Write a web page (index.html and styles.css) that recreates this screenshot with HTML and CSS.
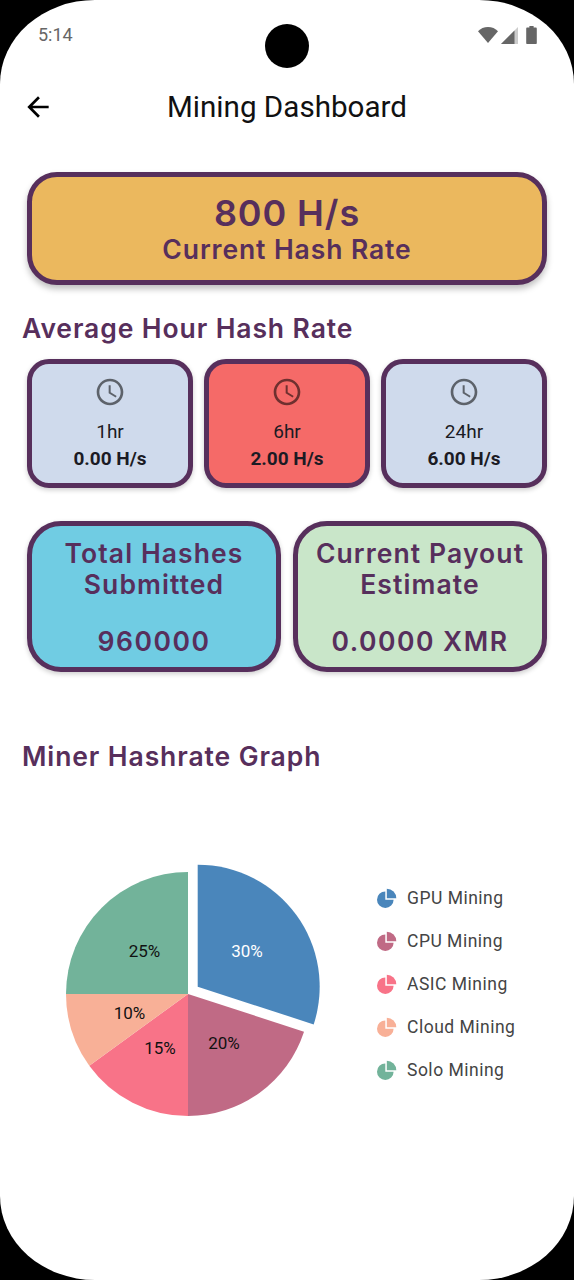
FILE: index.html
```html
<!DOCTYPE html>
<html lang="en">
<head>
    <meta charset="UTF-8">
    <meta name="viewport" content="width=device-width, initial-scale=1.0">
    <title>Mining Dashboard</title>
    <link rel="stylesheet" href="styles.css">
</head>
<body>
    <div class="screen">
        <div class="camera"></div>

        <div class="status-bar">
            <span class="status-time">5:14</span>
            <div class="status-icons">
                <svg class="status-wifi" viewBox="0 0 20 16"><path d="M10 16 0 4.200C2.600 1.600 6.100 0 10 0s7.400 1.600 10 4.200z"/></svg>
                <svg class="status-signal" viewBox="0 0 17 17"><path class="signal-dim" d="M17 0v17H0z"/><path d="M13.500 3.500V17H0z"/></svg>
                <svg class="status-battery" viewBox="0 0 10 17"><path d="M3 0h4v1.500h2c.6 0 1 .4 1 1V16c0 .6-.4 1-1 1H1c-.6 0-1-.4-1-1V2.500c0-.6.4-1 1-1h2z"/></svg>
            </div>
        </div>

        <header class="app-bar">
            <svg class="back-icon" viewBox="0 0 24 24"><path d="M20 11H7.830l5.590-5.590L12 4l-8 8 8 8 1.410-1.410L7.830 13H20z"/></svg>
            <h1 class="app-title">Mining Dashboard</h1>
        </header>

        <main class="content">
            <section class="hero-card">
                <div class="hero-value">800 H/s</div>
                <div class="hero-label">Current Hash Rate</div>
            </section>

            <h2 class="section-title avg-title">Average Hour Hash Rate</h2>

            <section class="avg-row">
                <div class="avg-card">
                    <svg class="clock-icon" viewBox="0 0 24 24"><path d="M11.990 2C6.470 2 2 6.480 2 12s4.470 10 9.990 10C17.520 22 22 17.520 22 12S17.520 2 11.990 2zM12 20c-4.420 0-8-3.580-8-8s3.580-8 8-8 8 3.580 8 8-3.580 8-8 8zm.5-13H11v6l5.250 3.150.75-1.230-4.500-2.670z"/></svg>
                    <div class="avg-period">1hr</div>
                    <div class="avg-value">0.00 H/s</div>
                </div>
                <div class="avg-card avg-card-active">
                    <svg class="clock-icon" viewBox="0 0 24 24"><path d="M11.990 2C6.470 2 2 6.480 2 12s4.470 10 9.990 10C17.520 22 22 17.520 22 12S17.520 2 11.990 2zM12 20c-4.420 0-8-3.580-8-8s3.580-8 8-8 8 3.580 8 8-3.580 8-8 8zm.5-13H11v6l5.250 3.150.75-1.230-4.500-2.670z"/></svg>
                    <div class="avg-period">6hr</div>
                    <div class="avg-value">2.00 H/s</div>
                </div>
                <div class="avg-card">
                    <svg class="clock-icon" viewBox="0 0 24 24"><path d="M11.990 2C6.470 2 2 6.480 2 12s4.470 10 9.990 10C17.520 22 22 17.520 22 12S17.520 2 11.990 2zM12 20c-4.420 0-8-3.580-8-8s3.580-8 8-8 8 3.580 8 8-3.580 8-8 8zm.5-13H11v6l5.250 3.150.75-1.230-4.500-2.670z"/></svg>
                    <div class="avg-period">24hr</div>
                    <div class="avg-value">6.00 H/s</div>
                </div>
            </section>

            <section class="total-row">
                <div class="total-card total-blue">
                    <div class="total-label">Total Hashes<br>Submitted</div>
                    <div class="total-value">960000</div>
                </div>
                <div class="total-card total-green">
                    <div class="total-label">Current Payout<br>Estimate</div>
                    <div class="total-value">0.0000 XMR</div>
                </div>
            </section>

            <h2 class="section-title graph-title">Miner Hashrate Graph</h2>

            <section class="chart-row">
                <svg class="pie" viewBox="0 0 270 264">
                    <path class="slice-gpu" transform="translate(9.7 -7.3)" d="M128 134V12A122 122 0 0 1 244 171.700Z"/>
                    <path class="slice-cpu" d="M128 134 244 171.700A122 122 0 0 1 128 256Z"/>
                    <path class="slice-asic" d="M128 134V256A122 122 0 0 1 29.300 205.700Z"/>
                    <path class="slice-cloud" d="M128 134 29.300 205.700A122 122 0 0 1 6 134Z"/>
                    <path class="slice-solo" d="M128 134H6A122 122 0 0 1 128 12Z"/>
                    <text class="pie-label pie-label-light" x="187" y="97">30%</text>
                    <text class="pie-label" x="84.500" y="97">25%</text>
                    <text class="pie-label" x="69.500" y="159">10%</text>
                    <text class="pie-label" x="100" y="194">15%</text>
                    <text class="pie-label" x="164" y="189">20%</text>
                </svg>

                <ul class="legend">
                    <li class="legend-item">
                        <svg class="legend-icon icon-gpu" viewBox="0 0 20 20"><path d="M8.300 3.400V11.700H16.600A8.300 8.300 0 1 1 8.300 3.400Z"/><path d="M9.800 .7A9.500 9.500 0 0 1 19.300 10.200H9.800Z"/></svg>
                        GPU Mining
                    </li>
                    <li class="legend-item">
                        <svg class="legend-icon icon-cpu" viewBox="0 0 20 20"><path d="M8.300 3.400V11.700H16.600A8.300 8.300 0 1 1 8.300 3.400Z"/><path d="M9.800 .7A9.500 9.500 0 0 1 19.300 10.200H9.800Z"/></svg>
                        CPU Mining
                    </li>
                    <li class="legend-item">
                        <svg class="legend-icon icon-asic" viewBox="0 0 20 20"><path d="M8.300 3.400V11.700H16.600A8.300 8.300 0 1 1 8.300 3.400Z"/><path d="M9.800 .7A9.500 9.500 0 0 1 19.300 10.200H9.800Z"/></svg>
                        ASIC Mining
                    </li>
                    <li class="legend-item">
                        <svg class="legend-icon icon-cloud" viewBox="0 0 20 20"><path d="M8.300 3.400V11.700H16.600A8.300 8.300 0 1 1 8.300 3.400Z"/><path d="M9.800 .7A9.500 9.500 0 0 1 19.300 10.200H9.800Z"/></svg>
                        Cloud Mining
                    </li>
                    <li class="legend-item">
                        <svg class="legend-icon icon-solo" viewBox="0 0 20 20"><path d="M8.300 3.400V11.700H16.600A8.300 8.300 0 1 1 8.300 3.400Z"/><path d="M9.800 .7A9.500 9.500 0 0 1 19.300 10.200H9.800Z"/></svg>
                        Solo Mining
                    </li>
                </ul>
            </section>
        </main>
    </div>
</body>
</html>
```

FILE: styles.css
```css
* {
    box-sizing: border-box;
}
html, body {
    margin: 0;
    background: #000;
}
body {
    width: 574px;
    height: 1280px;
    overflow: hidden;
    font-family: Roboto, sans-serif;
}
.screen {
    position: relative;
    height: 1280px;
    background: #fff;
    border-radius: 95px / 84px;
    overflow: hidden;
}
.camera {
    position: absolute;
    top: 24px;
    left: 265px;
    width: 44px;
    height: 44px;
    border-radius: 50%;
    background: #000;
}

/* status bar */
.status-bar {
    height: 68px;
    padding: 24px 37px 0 38px;
    display: flex;
    justify-content: space-between;
    align-items: flex-start;
}
.status-time {
    font-size: 18px;
    line-height: 21px;
    color: #666;
}
.status-icons {
    display: flex;
    align-items: center;
    gap: 3px;
    margin-top: 2px;
    fill: #666;
}
.status-wifi {
    width: 20px;
    height: 16px;
}
.status-signal {
    width: 17px;
    height: 17px;
}
.signal-dim {
    fill: #ccc;
}
.status-battery {
    width: 11px;
    height: 18px;
    margin-left: 5px;
}

/* app bar */
.app-bar {
    height: 78px;
    padding-left: 22px;
    display: flex;
    align-items: center;
}
.back-icon {
    width: 32px;
    height: 32px;
}
.app-title {
    flex: 1;
    margin: 0 54px 0 0;
    text-align: center;
    font-size: 29.600px;
    font-weight: 400;
    color: #111;
}

/* main content */
.content {
    padding: 26px 27px 0;
    color: #572f5c;
    font-family: Inter, sans-serif;
    font-weight: 600;
    letter-spacing: .9px;
}
.hero-card {
    height: 113px;
    border: 5px solid #572f5c;
    border-radius: 30px;
    background: #ebb85e;
    box-shadow: 0 4px 6px rgba(0, 0, 0, .25);
    text-align: center;
    padding-top: 17px;
}
.hero-value {
    font-size: 36px;
    line-height: 39px;
}
.hero-label {
    font-size: 26.500px;
    line-height: 32px;
}
.section-title {
    margin: 0 0 0 -5px;
    font-size: 26.500px;
    font-weight: 600;
    line-height: 32px;
}
.avg-title {
    margin-top: 27px;
}
.avg-row {
    margin-top: 15px;
    display: grid;
    grid-template-columns: repeat(3, 1fr);
    gap: 11px;
}
.avg-card {
    height: 129px;
    border: 5px solid #572f5c;
    border-radius: 22px;
    background: #cfdaec;
    box-shadow: 0 2px 5px rgba(0, 0, 0, .2);
    padding-top: 12px;
    text-align: center;
    color: #1b1b24;
    font-family: Roboto, sans-serif;
    font-size: 19px;
    font-weight: 400;
    letter-spacing: 0;
}
.avg-card-active {
    background: #f56a68;
}
.clock-icon {
    display: block;
    width: 32px;
    height: 32px;
    margin: 0 auto;
    fill: #000;
    fill-opacity: .55;
}
.avg-period {
    margin-top: 12px;
    line-height: 24px;
}
.avg-value {
    margin-top: 3px;
    line-height: 24px;
    font-weight: 700;
}
.total-row {
    margin-top: 33px;
    display: grid;
    grid-template-columns: repeat(2, 1fr);
    gap: 12px;
}
.total-card {
    height: 151px;
    border: 5px solid #572f5c;
    border-radius: 34px;
    box-shadow: 0 2px 5px rgba(0, 0, 0, .2);
    padding-top: 12px;
    text-align: center;
    font-size: 26.500px;
    line-height: 31px;
    letter-spacing: 1.100px;
}
.total-blue {
    background: #70cce3;
}
.total-green {
    background: #c9e6c9;
}
.total-value {
    margin-top: 26px;
    letter-spacing: 1.500px;
}
.graph-title {
    margin-top: 68px;
}

/* chart */
.chart-row {
    margin: 88px 0 0 33px;
    display: flex;
    gap: 47px;
    align-items: flex-start;
    letter-spacing: 0;
}
.pie {
    width: 270px;
    height: 264px;
}
.pie-label {
    font-family: Roboto, sans-serif;
    font-size: 17px;
    font-weight: 400;
    text-anchor: middle;
    fill: #111;
}
.pie-label-light {
    fill: #fff;
}
.slice-gpu { fill: #4a86bb; }
.slice-cpu { fill: #c06a85; }
.slice-asic { fill: #f87388; }
.slice-cloud { fill: #f8b097; }
.slice-solo { fill: #72b39a; }
.legend {
    list-style: none;
    margin: 16px 0 0;
    padding: 0;
}
.legend-item {
    height: 43px;
    display: flex;
    align-items: center;
    gap: 10px;
    color: #444;
    font-family: Roboto, sans-serif;
    font-size: 17.500px;
    font-weight: 400;
    letter-spacing: .5px;
    white-space: nowrap;
}
.legend-icon {
    width: 20px;
    height: 20px;
}
.icon-gpu { fill: #4a86bb; }
.icon-cpu { fill: #c06a85; }
.icon-asic { fill: #f87388; }
.icon-cloud { fill: #f8b097; }
.icon-solo { fill: #72b39a; }
```
